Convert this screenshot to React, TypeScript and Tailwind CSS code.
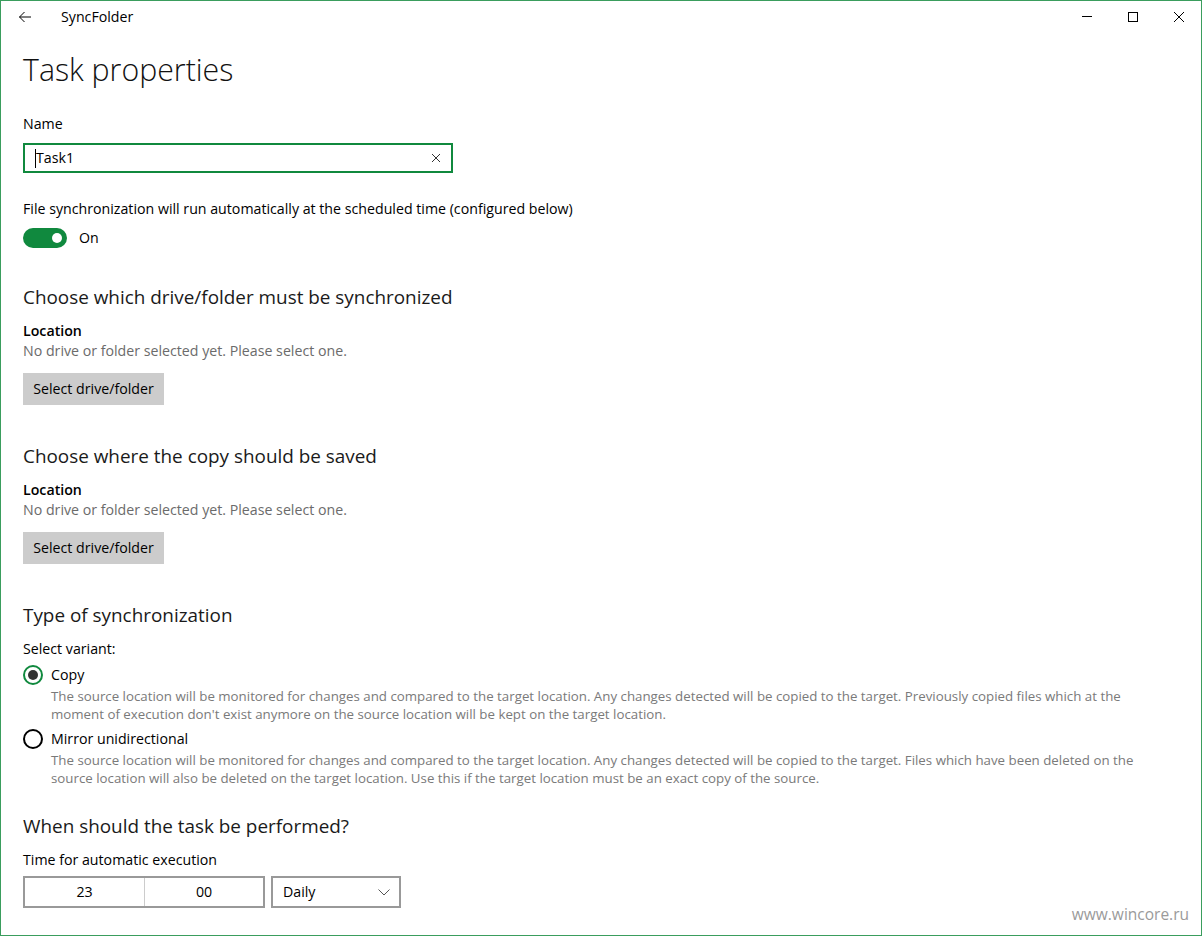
import React from "react";

const font = { fontFamily: '"Open Sans", "Noto Sans", sans-serif' };

function Section({ title, mt }: { title: string; mt: string }) {
  return (
    <>
      <div className={`${mt} h-[28px] leading-[28px] text-[18.9px] text-[#1a1a1a]`}>{title}</div>
      <div className="mt-[10px] h-[20px] leading-[20px] text-[14.2px] font-semibold text-black">Location</div>
      <div className="h-[20px] leading-[20px] text-[14.2px] text-[#6b6b6b]">No drive or folder selected yet. Please select one.</div>
      <button className="mt-[12px] h-[32px] w-[141px] bg-[#cccccc] text-[14.2px] text-black leading-[32px]">Select drive/folder</button>
    </>
  );
}

export default function App() {
  return (
    <div style={font} className="w-[1202px] h-[936px] border border-[#3a9d5d] bg-white relative overflow-hidden text-black">
      {/* title bar */}
      <div className="h-[31px] flex items-center">
        <div className="w-[48px] pl-[17px] flex items-center">
          <svg width="14" height="12" viewBox="0 0 14 12" fill="none" stroke="#000" strokeWidth="1">
            <path d="M13 6H1.5M6.5 1L1.5 6l5 5" />
          </svg>
        </div>
        <div className="ml-[12px] text-[14.2px] leading-[20px]">SyncFolder</div>
        <div className="ml-auto flex h-[31px]">
          <div className="w-[46px] flex items-center justify-center">
            <div className="w-[10px] h-px bg-black" />
          </div>
          <div className="w-[46px] flex items-center justify-center">
            <div className="w-[10px] h-[10px] border border-black" />
          </div>
          <div className="w-[45px] flex items-center justify-center">
            <svg width="10" height="10" viewBox="0 0 10 10" stroke="#000" strokeWidth="1">
              <path d="M0 0L10 10M10 0L0 10" />
            </svg>
          </div>
        </div>
      </div>

      <div className="pl-[22px] flex flex-col items-start">
        <div className="mt-[16px] h-[44px] leading-[44px] text-[30.3px] font-light text-[#111]">Task properties</div>

        <div className="mt-[22px] h-[20px] leading-[20px] text-[14.2px]">Name</div>
        <div className="mt-[9px] w-[430px] h-[30px] border-2 border-[#10893e] flex items-center pl-[10px] pr-[10px]">
          <div className="w-px h-[19px] bg-black" />
          <span className="text-[14.2px]">Task1</span>
          <svg className="ml-auto" width="10" height="10" viewBox="0 0 10 10" stroke="#333" strokeWidth="1">
            <path d="M1 1L9 9M9 1L1 9" />
          </svg>
        </div>

        <div className="mt-[26px] h-[20px] leading-[20px] text-[14.2px]">File synchronization will run automatically at the scheduled time (configured below)</div>
        <div className="mt-[9px] h-[20px] flex items-center">
          <div className="w-[44px] h-[20px] rounded-full bg-[#10893e] flex items-center justify-end pr-[5px]">
            <div className="w-[10px] h-[10px] rounded-full bg-white" />
          </div>
          <span className="ml-[12px] text-[14.2px] leading-[20px]">On</span>
        </div>

        <Section title="Choose which drive/folder must be synchronized" mt="mt-[35px]" />
        <Section title="Choose where the copy should be saved" mt="mt-[37px]" />

        <div className="mt-[37px] h-[28px] leading-[28px] text-[18.9px] text-[#1a1a1a]">Type of synchronization</div>
        <div className="mt-[10px] h-[20px] leading-[20px] text-[14.2px]">Select variant:</div>

        <div className="mt-[6px] h-[20px] flex items-center">
          <div className="w-[20px] h-[20px] rounded-full border-2 border-[#10893e] flex items-center justify-center">
            <div className="w-[10px] h-[10px] rounded-full bg-[#333]" />
          </div>
          <span className="ml-[8px] text-[14.2px] leading-[20px]">Copy</span>
        </div>
        <div className="mt-[2px] pl-[28px] text-[13.3px] leading-[18px] text-[#7a7a7a]">
          <div className="whitespace-nowrap">The source location will be monitored for changes and compared to the target location. Any changes detected will be copied to the target. Previously copied files which at the</div>
          <div className="whitespace-nowrap">moment of execution don't exist anymore on the source location will be kept on the target location.</div>
        </div>

        <div className="mt-[6px] h-[20px] flex items-center">
          <div className="w-[20px] h-[20px] rounded-full border-2 border-black" />
          <span className="ml-[8px] text-[14.2px] leading-[20px]">Mirror unidirectional</span>
        </div>
        <div className="mt-[2px] pl-[28px] text-[13.3px] leading-[18px] text-[#7a7a7a]">
          <div className="whitespace-nowrap">The source location will be monitored for changes and compared to the target location. Any changes detected will be copied to the target. Files which have been deleted on the</div>
          <div className="whitespace-nowrap">source location will also be deleted on the target location. Use this if the target location must be an exact copy of the source.</div>
        </div>

        <div className="mt-[25px] h-[28px] leading-[28px] text-[18.9px] text-[#1a1a1a]">When should the task be performed?</div>
        <div className="mt-[10px] h-[20px] leading-[20px] text-[14.2px]">Time for automatic execution</div>
        <div className="mt-[6px] flex gap-[6px]">
          <div className="w-[242px] h-[32px] border-2 border-[#999999] flex text-[14.2px]">
            <div className="w-[120px] flex items-center justify-center border-r border-[#cccccc]">23</div>
            <div className="flex-1 flex items-center justify-center">00</div>
          </div>
          <div className="w-[130px] h-[32px] border-2 border-[#999999] flex items-center pl-[10px] pr-[9px] text-[14.2px]">
            <span>Daily</span>
            <svg className="ml-auto" width="12" height="7" viewBox="0 0 12 7" fill="none" stroke="#555" strokeWidth="1">
              <path d="M0.5 0.5L6 6L11.5 0.5" />
            </svg>
          </div>
        </div>
      </div>

      <div className="absolute right-[12px] bottom-[11px] text-[15.5px] text-[#9a9a9a] leading-[20px]">www.wincore.ru</div>
    </div>
  );
}
